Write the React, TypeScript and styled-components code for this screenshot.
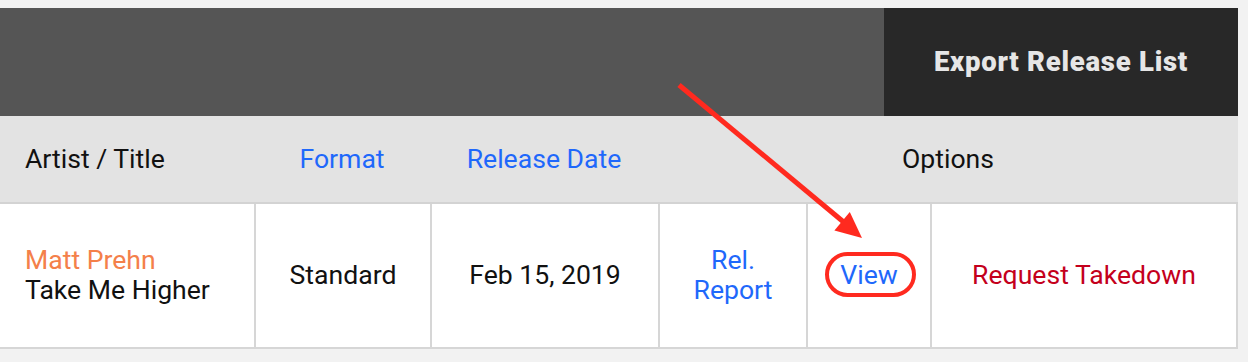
import { createGlobalStyle, styled } from "styled-components";

const GlobalStyle = createGlobalStyle`
  html, body {
    margin: 0;
    padding: 0;
    background: #f2f2f2;
  }
  body {
    font-family: Roboto, "Liberation Sans", Arial, sans-serif;
  }
`;

const Page = styled.div`
  position: relative;
  width: 1248px;
  height: 362px;
  padding-top: 8px;
  box-sizing: border-box;
  overflow: hidden;
`;

const Panel = styled.div`
  width: 1238px;
`;

const Toolbar = styled.div`
  display: flex;
  height: 108px;
  background: #555555;
`;

const ExportButton = styled.button`
  margin-left: auto;
  width: 354px;
  height: 100%;
  border: none;
  padding: 0 0 2px;
  background: #282828;
  color: #e6e6e6;
  font-family: Roboto, "Liberation Sans", Arial, sans-serif;
  font-weight: 900;
  font-size: 27.5px;
  letter-spacing: 0.75px;
  cursor: pointer;
`;

const COLS = "254px 176px 228px 148px 124px 1fr";

const HeaderRow = styled.div`
  display: grid;
  grid-template-columns: ${COLS};
  height: 88px;
  padding-bottom: 2px;
  box-sizing: border-box;
  background: #e3e3e3;
  border-bottom: 2px solid #d3d3d3;
`;

const HeadCell = styled.div<{ $left?: boolean; $span?: number; $link?: boolean }>`
  display: flex;
  align-items: center;
  justify-content: ${(p) => (p.$left ? "flex-start" : "center")};
  padding-left: ${(p) => (p.$left ? "25px" : "0")};
  grid-column: span ${(p) => p.$span ?? 1};
  font-size: 26.6px;
  color: ${(p) => (p.$link ? "#1f68fb" : "#111111")};
`;

const BodyRow = styled.div`
  display: grid;
  grid-template-columns: ${COLS};
  height: 145px;
  background: #ffffff;
  border-bottom: 2px solid #d6d6d6;
  border-right: 2px solid #d6d6d6;
  box-sizing: border-box;
`;

const Cell = styled.div<{ $left?: boolean }>`
  display: flex;
  flex-direction: column;
  justify-content: center;
  align-items: ${(p) => (p.$left ? "flex-start" : "center")};
  text-align: ${(p) => (p.$left ? "left" : "center")};
  padding: 0 0 1px ${(p) => (p.$left ? "25px" : "0")};
  border-left: 2px solid #d6d6d6;
  font-size: 26.6px;
  line-height: 30px;
  color: #111111;

  &:first-child {
    border-left: none;
  }
`;

const Artist = styled.span`
  color: #f4804a;
`;

const Link = styled.a<{ $tone?: "blue" | "red" }>`
  color: ${(p) => (p.$tone === "red" ? "#c4001c" : "#1f68fb")};
  text-decoration: none;
  cursor: pointer;
`;

const Annotation = styled.svg`
  position: absolute;
  top: 0;
  left: 0;
  pointer-events: none;
`;

export default function App() {
  return (
    <>
      <GlobalStyle />
      <Page>
        <Panel>
          <Toolbar>
            <ExportButton>Export Release List</ExportButton>
          </Toolbar>
          <HeaderRow>
            <HeadCell $left>Artist / Title</HeadCell>
            <HeadCell $link>Format</HeadCell>
            <HeadCell $link>Release Date</HeadCell>
            <HeadCell $span={3}>Options</HeadCell>
          </HeaderRow>
          <BodyRow>
            <Cell $left>
              <Artist>Matt Prehn</Artist>
              <span>Take Me Higher</span>
            </Cell>
            <Cell>Standard</Cell>
            <Cell>Feb 15, 2019</Cell>
            <Cell>
              <Link>
                Rel.
                <br />
                Report
              </Link>
            </Cell>
            <Cell>
              <Link>View</Link>
            </Cell>
            <Cell>
              <Link $tone="red">Request Takedown</Link>
            </Cell>
          </BodyRow>
        </Panel>
        <Annotation width="1248" height="362" viewBox="0 0 1248 362">
          <line x1="679" y1="85" x2="846" y2="224" stroke="#ff2a1f" strokeWidth="5" />
          <polygon points="862,238 834.4,230.5 849.8,212.1" fill="#ff2a1f" />
          <rect x="827" y="254" width="87" height="41" rx="20.5" fill="none" stroke="#ff2a1f" strokeWidth="4" />
        </Annotation>
      </Page>
    </>
  );
}
